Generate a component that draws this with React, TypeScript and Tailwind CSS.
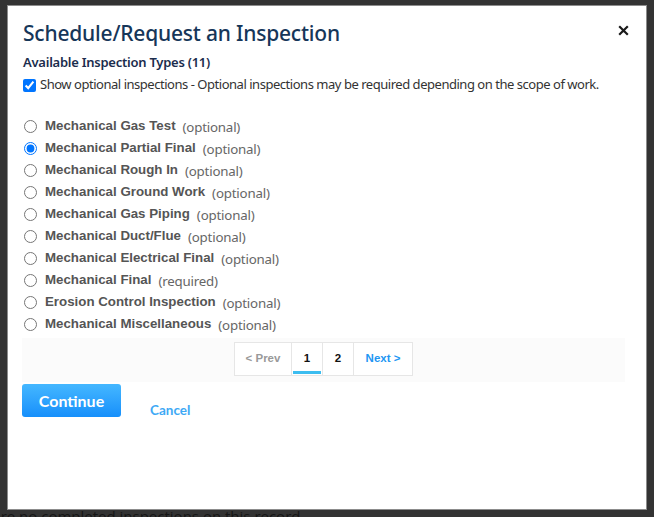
import React from "react";

const items: { name: string; tag: string }[] = [
  { name: "Mechanical Gas Test", tag: "(optional)" },
  { name: "Mechanical Partial Final", tag: "(optional)" },
  { name: "Mechanical Rough In", tag: "(optional)" },
  { name: "Mechanical Ground Work", tag: "(optional)" },
  { name: "Mechanical Gas Piping", tag: "(optional)" },
  { name: "Mechanical Duct/Flue", tag: "(optional)" },
  { name: "Mechanical Electrical Final", tag: "(optional)" },
  { name: "Mechanical Final", tag: "(required)" },
  { name: "Erosion Control Inspection", tag: "(optional)" },
  { name: "Mechanical Miscellaneous", tag: "(optional)" },
];

export default function App() {
  return (
    <div className="relative h-[517px] w-[654px] overflow-hidden bg-[#333333]">
      {/* underlying page (dimmed) */}
      <div className="flex h-full flex-col justify-end">
        <div
          className="mb-[-7px] ml-[-52px] whitespace-nowrap text-[15px] leading-[16px] text-[#161616]"
          style={{ fontFamily: '"Open Sans", sans-serif' }}
        >
          There are no completed inspections on this record.
        </div>
      </div>

      {/* modal */}
      <div className="absolute left-[7px] top-[5px] flex h-[505px] w-[640px] flex-col border border-[#8c8c8c] bg-white pl-[14px] pr-[21px] pt-[12px]">
        <div className="flex items-start justify-between">
          <h1
            className="pl-[1px] text-[21px] leading-[30px] font-medium text-[#163659]"
            style={{ fontFamily: '"Noto Sans", sans-serif', letterSpacing: "-0.2px" }}
          >
            Schedule/Request an Inspection
          </h1>
          <button className="mr-[-5px] mt-[5px] flex h-[14px] w-[14px] items-center justify-center">
            <svg width="11" height="11" viewBox="0 0 11 11">
              <path d="M1.2 1.2 L9.8 9.8 M9.8 1.2 L1.2 9.8" stroke="#1a1a1a" strokeWidth="2.2" />
            </svg>
          </button>
        </div>

        <div
          className="mt-[4px] pl-[1px] text-[13px] leading-[20px] font-semibold text-[#1b2d4d]"
          style={{ fontFamily: '"Noto Sans", sans-serif', letterSpacing: "-0.25px" }}
        >
          Available Inspection Types (11)
        </div>

        <label
          className="mt-[3px] flex h-[20px] items-center gap-[4px] pl-[1px] text-[13px] text-[#333333]"
          style={{ fontFamily: '"Noto Sans", sans-serif', letterSpacing: "-0.47px" }}
        >
          <input type="checkbox" defaultChecked className="m-0 h-[13px] w-[13px] accent-[#0075ff]" />
          <span>Show optional inspections - Optional inspections may be required depending on the scope of work.</span>
        </label>

        <div className="mt-[20px] flex flex-col">
          {items.map((it, i) => (
            <label key={it.name} className="flex h-[22px] items-center">
              <input
                type="radio"
                name="insp"
                defaultChecked={i === 1}
                className="m-0 ml-[2px] h-[13px] w-[13px] accent-[#0075ff]"
              />
              <span
                className="ml-[8px] text-[13.3px] font-bold text-[#555555]"
                style={{ fontFamily: '"Liberation Sans", Arial, sans-serif' }}
              >
                {it.name}
              </span>
              <span
                className="ml-[7px] mt-[3px] text-[13.3px] text-[#666666]"
                style={{ fontFamily: '"Noto Sans", sans-serif', letterSpacing: "-0.2px" }}
              >
                {it.tag}
              </span>
            </label>
          ))}
        </div>

        <div className="mt-[3px] flex h-[44px] justify-center bg-[#fbfbfb] pt-[4px]">
          <div
            className="flex h-[34px] text-[11.5px] font-bold"
            style={{ fontFamily: '"Liberation Sans", Arial, sans-serif' }}
          >
            <div className="flex w-[58px] items-center justify-center border border-[#e6e6e6] bg-white text-[#999999]">
              &lt; Prev
            </div>
            <div className="relative flex w-[31px] items-center justify-center border border-l-0 border-[#e6e6e6] bg-white text-[#111111]">
              1
              <div className="absolute bottom-[1px] left-[1px] right-[1px] h-[3px] bg-[#3cbdf0]" />
            </div>
            <div className="flex w-[31px] items-center justify-center border border-l-0 border-[#e6e6e6] bg-white text-[#111111]">
              2
            </div>
            <div className="flex w-[59px] items-center justify-center border border-l-0 border-[#e6e6e6] bg-white text-[#2196f3]">
              Next &gt;
            </div>
          </div>
        </div>

        <div className="mt-[2px] flex items-end">
          <button
            className="flex h-[33px] w-[99px] items-center justify-center rounded-[3px] bg-gradient-to-b from-[#44b7ff] to-[#158ffb] text-[16px] font-bold text-white"
            style={{ fontFamily: "Lato, sans-serif" }}
          >
            Continue
          </button>
          <span
            className="mb-[-3px] ml-[29px] text-[13.5px] font-bold text-[#3ea9f5]"
            style={{ fontFamily: "Lato, sans-serif" }}
          >
            Cancel
          </span>
        </div>
      </div>
    </div>
  );
}
